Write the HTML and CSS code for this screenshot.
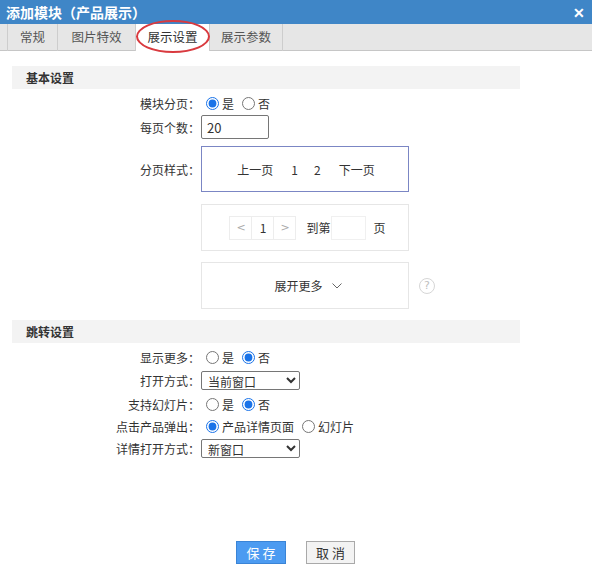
FILE: index.html
```html
<!DOCTYPE html>
<html lang="zh-CN">
<head>
<meta charset="utf-8">
<title>添加模块（产品展示）</title>
<link rel="stylesheet" href="styles.css">
</head>
<body>
<div class="dialog">
  <div class="titlebar">
    <span class="title">添加模块（产品展示）</span>
    <span class="close">✕</span>
  </div>
  <div class="tabs">
    <div class="tab t1">常规</div>
    <div class="tab t2">图片特效</div>
    <div class="tab t3 active">展示设置<span class="ring"></span></div>
    <div class="tab t4">展示参数</div>
  </div>

  <div class="content">
    <div class="section">基本设置</div>
    <div class="row r1">
      <div class="label">模块分页：</div>
      <div class="val">
        <label class="opt"><input type="radio" name="fy" checked>是</label>
        <label class="opt"><input type="radio" name="fy">否</label>
      </div>
    </div>
    <div class="row r2">
      <div class="label">每页个数：</div>
      <div class="val"><input class="num" type="text" value="20"></div>
    </div>
    <div class="row r3">
      <div class="label">分页样式：</div>
      <div class="val">
        <div class="pbox selected">
          <span>上一页</span><span class="n">1</span><span class="n">2</span><span>下一页</span>
        </div>
      </div>
    </div>
    <div class="row r4">
      <div class="label"></div>
      <div class="val">
        <div class="pbox">
          <div class="pager">
            <span class="pg arrow">&lt;</span><span class="pg">1</span><span class="pg arrow">&gt;</span>
            <span class="goto">到第</span><span class="gobox"></span><span class="ye">页</span>
          </div>
        </div>
      </div>
    </div>
    <div class="row r5">
      <div class="label"></div>
      <div class="val">
        <div class="pbox">
          <span class="more">展开更多</span>
          <svg class="chev" width="10" height="6" viewBox="0 0 10 6"><path d="M0.5 0.5 L5 5 L9.5 0.5" fill="none" stroke="#666" stroke-width="1"/></svg>
        </div>
        <span class="help">?</span>
      </div>
    </div>

    <div class="section s2">跳转设置</div>
    <div class="row j1">
      <div class="label">显示更多：</div>
      <div class="val">
        <label class="opt"><input type="radio" name="xs">是</label>
        <label class="opt"><input type="radio" name="xs" checked>否</label>
      </div>
    </div>
    <div class="row j2">
      <div class="label">打开方式：</div>
      <div class="val"><select class="sel"><option>当前窗口</option><option>新窗口</option></select></div>
    </div>
    <div class="row j3">
      <div class="label">支持幻灯片：</div>
      <div class="val">
        <label class="opt"><input type="radio" name="hd">是</label>
        <label class="opt"><input type="radio" name="hd" checked>否</label>
      </div>
    </div>
    <div class="row j4">
      <div class="label">点击产品弹出：</div>
      <div class="val">
        <label class="opt"><input type="radio" name="tc" checked>产品详情页面</label>
        <label class="opt"><input type="radio" name="tc">幻灯片</label>
      </div>
    </div>
    <div class="row j5">
      <div class="label">详情打开方式：</div>
      <div class="val"><select class="sel"><option>新窗口</option><option>当前窗口</option></select></div>
    </div>
  </div>

  <div class="buttons">
    <button class="btn save">保存</button>
    <button class="btn cancel">取消</button>
  </div>
</div>
</body>
</html>
```

FILE: styles.css
```css
* { box-sizing: border-box; }
html, body { margin: 0; padding: 0; background: #fff; }
body {
  width: 592px;
  height: 568px;
  overflow: hidden;
  font-family: "Noto Sans CJK SC", "Microsoft YaHei", sans-serif;
  font-size: 12px;
  color: #333;
}
.dialog { width: 592px; height: 568px; display: flex; flex-direction: column; }

.titlebar {
  height: 24px;
  background: #3f86c7;
  display: flex;
  align-items: center;
  justify-content: space-between;
  padding: 0 6px 0 6px;
  color: #fff;
}
.title { font-size: 14px; font-weight: bold; line-height: 24px; }
.close { font-size: 14px; font-weight: bold; line-height: 24px; margin-right: 1px; }

.tabs {
  height: 27px;
  background: #e6e6e6;
  border-bottom: 1px solid #c6c6c6;
  display: flex;
  padding-left: 7px;
}
.tab {
  position: relative;
  height: 27px;
  line-height: 26px;
  text-align: center;
  font-size: 12.5px;
  color: #555;
  border-right: 1px solid #cdcdcd;
}
.t1 { width: 51px; border-left: 1px solid #cdcdcd; }
.t2 { width: 78px; }
.t3 { width: 74px; }
.t4 { width: 73px; }
.tab.active { background: #fff; color: #333; }
.ring {
  position: absolute;
  left: 0px;
  top: -4px;
  width: 74px;
  height: 33px;
  border: 2px solid #d93a3f;
  border-radius: 50%;
}

.content { padding-top: 15px; }
.section {
  margin-left: 12px;
  width: 508px;
  height: 23px;
  background: #f3f3f3;
  padding-left: 14px;
  line-height: 23px;
  font-weight: bold;
  font-size: 12px;
  color: #333;
}
.s2 { margin-top: 11px; }

.row { display: flex; align-items: center; }
.label { width: 200px; text-align: right; color: #333; font-size: 12px; }
.val { display: flex; align-items: center; }

.r1 { margin-top: 4px; height: 20px; }
.r2 { margin-top: 2px; height: 24px; }
.r3 { margin-top: 7px; }
.r4 { margin-top: 12px; }
.r5 { margin-top: 11px; }

.opt { display: inline-flex; align-items: center; margin-right: 3px; color: #333; }
.opt input { margin: 0 3px 0 5px; width: 13px; height: 13px; accent-color: #1a73e8; }
.val .opt:first-child input { margin-left: 6px; }

.num {
  margin-left: 1px;
  width: 68px;
  height: 24px;
  border: 1px solid #767676;
  border-radius: 2px;
  padding: 0 5px;
  font-family: inherit;
  font-size: 13px;
  color: #333;
}

.pbox {
  margin-left: 1px;
  width: 208px;
  height: 47px;
  border: 1px solid #e6e6e6;
  display: flex;
  align-items: center;
  justify-content: center;
  font-size: 12px;
  color: #333;
}
.pbox.selected { border-color: #7b86c4; height: 46px; padding-left: 2px; }
.pbox.selected span { margin: 0 10px; }
.pbox.selected span.n { margin: 0 8px; }

.pager { display: flex; align-items: center; margin-left: 5px; }
.pg {
  width: 23px;
  height: 24px;
  border: 1px solid #ededed;
  margin-right: -1px;
  display: flex;
  align-items: center;
  justify-content: center;
  color: #333;
}
.pg.arrow { color: #aaa; font-family: "DejaVu Sans", sans-serif; font-size: 11px; }
.goto { margin-left: 11px; }
.gobox { width: 35px; height: 24px; border: 1px solid #f0f0f0; }
.ye { margin-left: 8px; }

.more { color: #333; margin-left: 6px; }
.chev { margin-left: 9px; }
.help {
  margin-left: 10px;
  width: 16px;
  height: 16px;
  border: 1px solid #d6d6d6;
  border-radius: 50%;
  color: #c0c0c0;
  font-size: 11px;
  display: flex;
  align-items: center;
  justify-content: center;
  font-family: "DejaVu Sans", sans-serif;
}

.j1 { margin-top: 4px; height: 20px; }
.j2 { margin-top: 3px; height: 20px; }
.j3 { margin-top: 3px; height: 22px; }
.j4 { margin-top: 0; height: 22px; }
.j5 { margin-top: 1px; height: 21px; }

.sel {
  margin-left: 1px;
  width: 99px;
  height: 19px;
  border: 1px solid #767676;
  border-radius: 2px;
  font-family: inherit;
  font-size: 12px;
  color: #333;
  background: #fff;
  padding: 0 2px;
}

.buttons {
  margin-top: auto;
  margin-bottom: 4px;
  display: flex;
  justify-content: center;
  gap: 20px;
  padding-right: 1px;
}
.btn {
  width: 50px;
  height: 23px;
  font-family: inherit;
  font-size: 13px;
  letter-spacing: 3px;
  padding: 0 0 0 3px;
  border-radius: 0;
  cursor: pointer;
}
.save { background: #4c9bf1; border: 1px solid #3a84d6; color: #fff; }
.cancel { background: #f3f3f3; border: 1px solid #a9a9a9; color: #333; width: 49px; }
```
